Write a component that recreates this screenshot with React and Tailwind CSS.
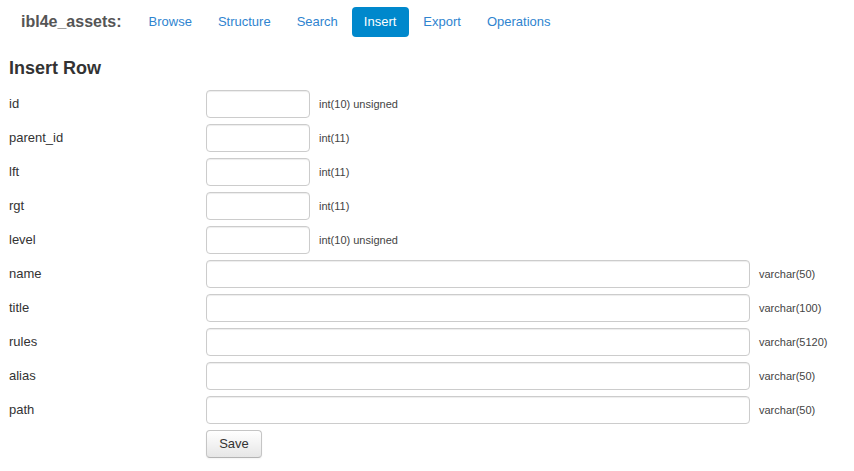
export default function App() {
  const rows = [
    { name: "id", type: "int(10) unsigned", long: false },
    { name: "parent_id", type: "int(11)", long: false },
    { name: "lft", type: "int(11)", long: false },
    { name: "rgt", type: "int(11)", long: false },
    { name: "level", type: "int(10) unsigned", long: false },
    { name: "name", type: "varchar(50)", long: true },
    { name: "title", type: "varchar(100)", long: true },
    { name: "rules", type: "varchar(5120)", long: true },
    { name: "alias", type: "varchar(50)", long: true },
    { name: "path", type: "varchar(50)", long: true },
  ];
  const nav = ["Browse", "Structure", "Search", "Insert", "Export", "Operations"];
  return (
    <div
      className="w-[854px] h-[471px] bg-white text-[#333]"
      style={{ fontFamily: '"Liberation Sans", Arial, sans-serif' }}
    >
      <div className="flex items-center pt-[7px] pl-[21px]">
        <span className="text-[16px] font-bold text-[#555] leading-[20px] mr-[15px]">
          ibl4e_assets:
        </span>
        <div className="flex items-center">
          {nav.map((n) => (
            <span
              key={n}
              className={
                "h-[30px] flex items-center px-[12px] mr-[2px] rounded-[4px] text-[13px] " +
                (n === "Insert" ? "bg-[#0088cc] text-white pr-[13px]" : "text-[#2f84cf]")
              }
            >
              {n}
            </span>
          ))}
        </div>
      </div>
      <div className="pl-[9px]">
        <h3 className="mt-[21px] text-[18px] font-bold leading-[20px] text-[#333]">Insert Row</h3>
        <div className="mt-[12px] flex flex-col gap-[6px]">
          {rows.map((r) => (
            <div key={r.name} className="flex items-center h-[28px]">
              <span className="w-[197px] text-[13px] text-[#333]">{r.name}</span>
              <input
                className={
                  (r.long ? "w-[544px]" : "w-[104px]") +
                  " h-[28px] border border-[#ccc] rounded-[4px] bg-white shadow-[inset_0_1px_1px_rgba(0,0,0,0.075)] outline-none"
                }
              />
              <span className="ml-[9px] text-[11px] text-[#444]">{r.type}</span>
            </div>
          ))}
          <div className="flex h-[28px]">
            <div className="w-[197px]" />
            <button className="w-[56px] h-[28px] border border-[#c5c5c5] border-b-[#b3b3b3] rounded-[4px] bg-gradient-to-b from-white to-[#e6e6e6] text-[13px] text-[#333] shadow-[inset_0_1px_0_rgba(255,255,255,0.2),0_1px_2px_rgba(0,0,0,0.05)]">
              Save
            </button>
          </div>
        </div>
      </div>
    </div>
  );
}
